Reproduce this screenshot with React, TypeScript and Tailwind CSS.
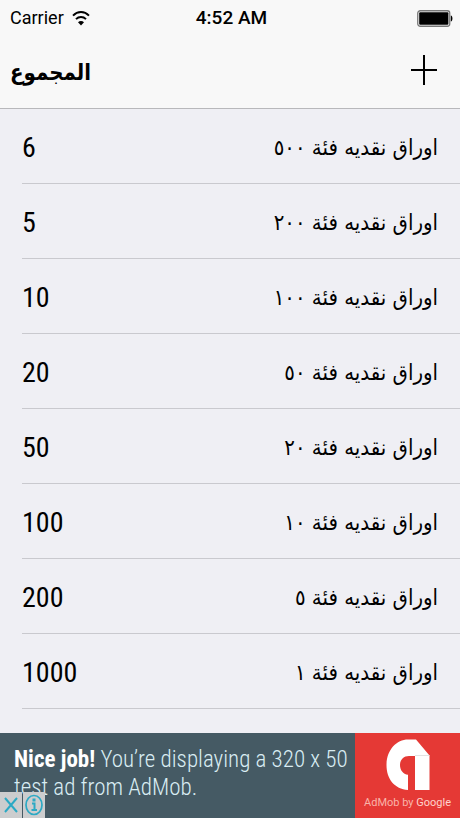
const rows: { count: string; label: string }[] = [
  { count: '6', label: 'اوراق نقديه فئة ٥٠٠' },
  { count: '5', label: 'اوراق نقديه فئة ٢٠٠' },
  { count: '10', label: 'اوراق نقديه فئة ١٠٠' },
  { count: '20', label: 'اوراق نقديه فئة ٥٠' },
  { count: '50', label: 'اوراق نقديه فئة ٢٠' },
  { count: '100', label: 'اوراق نقديه فئة ١٠' },
  { count: '200', label: 'اوراق نقديه فئة ٥' },
  { count: '1000', label: 'اوراق نقديه فئة ١' },
];

function WifiIcon() {
  return (
    <svg width="18" height="16" viewBox="0 0 18 16" fill="none" stroke="#000" strokeWidth="2" aria-hidden="true">
      <path d="M1 5.6C5.6.9 12.4.9 17 5.6" />
      <path d="M4 9.1c2.9-2.8 7.1-2.8 10 0" />
      <path d="M9 15.4 6 12.2c1.8-1.7 4.2-1.7 6 0z" fill="#000" stroke="none" />
    </svg>
  );
}

function BatteryIcon() {
  return (
    <svg width="36" height="17" viewBox="0 0 36 17" aria-hidden="true">
      <rect x=".75" y=".75" width="32" height="15.500" rx="2.5" fill="#f8f8f8" stroke="#777" strokeWidth="1.3" />
      <rect x="2.2" y="2.2" width="29.2" height="12.6" rx="1" fill="#000" />
      <path d="M33.8 5.5c2.2.3 2.2 5.7 0 6z" fill="#000" />
    </svg>
  );
}

function StatusBar() {
  return (
    <div className="grid h-9 grid-cols-3 items-center pr-[7px] pl-[10px] text-black">
      <div className="flex items-center gap-2 font-['Roboto',sans-serif] text-lg">
        <span>Carrier</span>
        <WifiIcon />
      </div>
      <div className="text-center font-['Roboto',sans-serif] text-[19px] font-medium whitespace-nowrap">4:52 AM</div>
      <div className="flex justify-end">
        <BatteryIcon />
      </div>
    </div>
  );
}

function AdBanner() {
  return (
    <aside className="relative flex h-[85px] bg-[#455a64]">
      <p className="min-w-0 flex-1 pt-[13px] pl-[14px] font-['Roboto_Condensed','Roboto',sans-serif] text-[23px] leading-7 font-light whitespace-nowrap text-[#d9edf3]">
        <strong className="font-bold text-white">Nice job!</strong> You’re displaying a 320 x 50
        <br />
        test ad from AdMob.
      </p>
      <div className="flex w-[105px] shrink-0 flex-col items-center gap-1 bg-[#e53935] pt-[6px]">
        <svg width="44" height="52" viewBox="0 0 44 52" aria-hidden="true">
          <path d="M22 51C8.500 50 .5 40 .5 26C.5 11 10.500 .5 22 .5h8L43.5 16.5V51H29V17h-6C17.500 17 14 21 14 26c0 5 3 9.300 8 9.800z" fill="#fff" />
          <path d="M29 17V16h14.500V17z" fill="#e2e2e2" />
        </svg>
        <div className="font-['Roboto',sans-serif] text-[11px] leading-4 whitespace-nowrap text-[#f9b4a9]">
          AdMob by <span className="text-[#ffd3cc]">Google</span>
        </div>
      </div>
      <div className="absolute bottom-0 left-0 flex h-[26px] gap-px text-[#2ba9c4]">
        <button type="button" aria-label="Close ad" className="flex w-[22px] items-center justify-center bg-[#cccdce]">
          <svg width="14" height="18" viewBox="0 0 14 18" stroke="currentColor" strokeWidth="2" aria-hidden="true">
            <path d="M1 2l12 14M13 2L1 16" />
          </svg>
        </button>
        <button type="button" aria-label="Ad information" className="flex w-[22px] items-center justify-center bg-[#cccdce]">
          <svg width="18" height="22" viewBox="0 0 18 22" fill="none" stroke="currentColor" aria-hidden="true">
            <ellipse cx="9" cy="11" rx="8" ry="9.500" strokeWidth="1.700" />
            <path d="M7 9.500h2.500V16M6.500 16h5.500" strokeWidth="2" />
            <path d="M9 4.500v3" strokeWidth="3" />
          </svg>
        </button>
      </div>
    </aside>
  );
}

export default function App() {
  return (
    <div className="flex min-h-screen flex-col bg-[#efeff4] text-black">
      <header className="border-b border-[#b8b8bb] bg-[#f8f8f8]">
        <StatusBar />
        <div className="flex h-[72px] items-center justify-between pr-[21px] pl-[10px]">
          <h1 dir="rtl" lang="ar" className="font-['DejaVu_Sans_Condensed','DejaVu_Sans',sans-serif] text-[22px] font-bold">المجموع</h1>
          <button type="button" aria-label="Add" className="pb-1">
            <svg width="30" height="32" viewBox="0 0 30 32" stroke="#000" strokeWidth="2" aria-hidden="true">
              <path d="M2 16h26M15 1v30" />
            </svg>
          </button>
        </div>
      </header>
      <main className="flex-1 pb-6">
        <ul>
          {rows.map((row) => (
            <li key={row.count} className="ml-[22px] flex h-[75px] items-center justify-between border-b border-[#c9c9ce] pt-[3px] pr-[22px]">
              <span className="font-['Roboto_Condensed','Roboto',sans-serif] text-[28px] leading-8">{row.count}</span>
              <span dir="rtl" lang="ar" className="font-['DejaVu_Sans_Condensed','DejaVu_Sans',sans-serif] text-[22px] leading-8 whitespace-nowrap">{row.label}</span>
            </li>
          ))}
        </ul>
      </main>
      <AdBanner />
    </div>
  );
}
